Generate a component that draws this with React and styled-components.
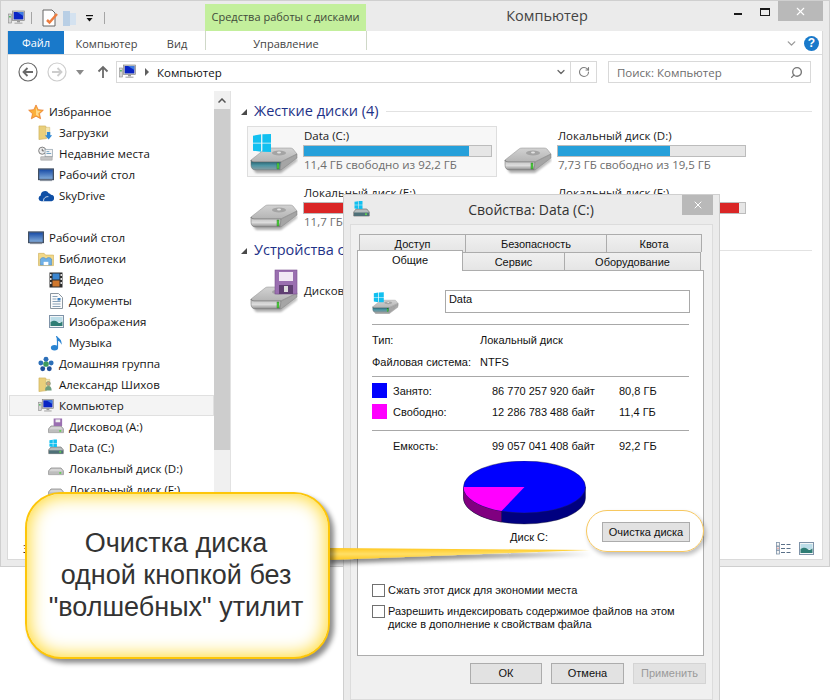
import React from "react";
import styled, { createGlobalStyle } from "styled-components";
import { ChevronDown, RotateCw, Search, X } from "lucide-react";

const UI = `"Open Sans", "Noto Sans", sans-serif`;
const DLG = `"Liberation Sans", Arial, sans-serif`;

const Global = createGlobalStyle`
  html, body { margin: 0; padding: 0; background: #fff; }
  * { box-sizing: border-box; }
`;

const Stage = styled.div`
  position: relative; width: 830px; height: 700px; overflow: hidden;
  background: #fff; font-family: ${UI}; font-size: 12px; color: #1a1a1a;
`;
const Window = styled.div`
  width: 830px; height: 567px; background: #ebebeb; border: 1px solid #cfcfcf;
  padding: 0 6px 6px; display: flex; flex-direction: column;
`;
const TitleBar = styled.div`
  height: 30px; flex: none; display: grid; grid-template-columns: 198px 161px 360px 1fr; margin-right: -6px;
`;
const Qat = styled.div`display: flex; align-items: center; padding: 4px 0 0 1px;`;
const QatSep = styled.span`width: 1px; height: 12px; background: #a5a5a5; margin: ${p => p.$m};`;
const QatGap = styled.span`width: ${p => p.$w}px; flex: none;`;
const ContextHead = styled.div`
  margin-top: 3px; background: #c3ef9c; color: #3f4a3a; text-align: center;
  font-size: 11px; line-height: 26px; white-space: nowrap;
`;
const Title = styled.div`
  text-align: center; font-size: 14.5px; line-height: 29px; color: #444; padding-left: 2px;
`;
const Controls = styled.div`display: flex; justify-content: flex-end; align-items: flex-start; padding-right: 6px;`;
const MinBtn = styled.span`width: 8px; height: 2px; background: #1a1a1a; margin: 12px 18px 0 0;`;
const MaxBtn = styled.span`width: 10px; height: 8px; border: 1px solid #1a1a1a; border-top-width: 2px; margin: 7px 8px 0 0;`;
const CloseBtn = styled.span`
  width: ${p => p.$w}px; height: 20px; background: #b9b9b9; color: #fff;
  display: flex; align-items: center; justify-content: center;
`;
const Inner = styled.div`
  flex: 1; min-height: 0; background: #fff; border: 1px solid #dadada; border-top: 0;
  display: flex; flex-direction: column;
`;
const RibbonTabs = styled.div`
  height: 24px; flex: none; display: flex; align-items: stretch; border-bottom: 1px solid #dadbdc;
  font-size: 11px; color: #444;
`;
const FileTab = styled.div`width: 56px; background: #1979ca; color: #fff; text-align: center; line-height: 23px;`;
const RibbonTab = styled.div`width: ${p => p.$w}px; text-align: center; line-height: 26px;`;
const ContextTab = styled.div`
  width: 162px; height: 19px; text-align: center; line-height: 26px; overflow: visible;
  border-left: 1px solid #cfd8c8; border-right: 1px solid #cfd8c8;
`;
const RibbonEnd = styled.div`
  flex: 1; display: flex; justify-content: flex-end; align-items: center; gap: 6px; padding: 2px 3px 0 0; color: #9a9a9a;
`;
const Help = styled.span`
  width: 15px; height: 15px; border-radius: 50%; background: #1979ca; color: #fff;
  font: bold 12px/15px ${DLG}; text-align: center;
`;
const Nav = styled.div`height: 36px; flex: none; display: flex; align-items: center; padding: 0 0 2px 10px;`;
const NavGroup = styled.div`display: flex; align-items: center; width: 98px;`;
const NavGap = styled.span`width: ${p => p.$w}px; flex: none;`;
const AddressBox = styled.div`
  width: 481px; height: 22px; border: 1px solid #d9d9d9; display: flex; align-items: center;
  font-size: 11.5px; color: #111;
`;
const Crumb = styled.span`flex: 1; display: flex; align-items: center; gap: 8px; padding-left: 2px;`;
const CrumbArrow = styled.span`width: 0; height: 0; border-left: 4px solid #5f5f5f; border-top: 4px solid transparent; border-bottom: 4px solid transparent; margin-left: 1px;`;
const AddrDown = styled.span`display: flex; margin-right: 3px; color: #666;`;
const AddrEnd = styled.span`
  width: 26px; height: 100%; border-left: 1px solid #d9d9d9; display: flex; align-items: center; justify-content: center; color: #7d7d7d;
`;
const SearchBox = styled.div`
  width: 203px; height: 22px; margin-left: 11px; border: 1px solid #d9d9d9; padding: 0 7px 0 8px;
  display: flex; align-items: center; justify-content: space-between; color: #6d6d6d; font-size: 11.5px;
`;
const SearchGlyph = styled.span`display: flex; color: #777; transform: scaleX(-1);`;
const Content = styled.div`height: 446px; flex: none; display: flex;`;
const Sidebar = styled.div`width: 206px; flex: none; padding-top: 10px; overflow: hidden;`;
const TreeRow = styled.div`
  height: 21px; margin: 0 0 0 1px; display: flex; align-items: center; gap: 5px;
  padding-left: ${p => 18 + p.$level * 10}px; white-space: nowrap; font-size: 11.5px; color: #151515;
  border: 1px solid ${p => (p.$sel ? "#e0e0e0" : "transparent")};
  background: ${p => (p.$sel ? "#f4f4f4" : "transparent")};
`;
const IconSlot = styled.span`width: 16px; flex: none; display: flex; justify-content: center;`;
const TreeGap = styled.div`height: 21px;`;
const Scrollbar = styled.div`
  width: 17px; flex: none; background: #f0f0f0; border-right: 1px solid #e2e2e2; display: flex; flex-direction: column;
`;
const ScrollUp = styled.div`height: 18px; display: flex; align-items: center; justify-content: center; color: #555;`;
const ScrollThumb = styled.div`height: 341px; width: 16px; background: #cdcdcd;`;
const Main = styled.div`flex: 1; padding: 10px 10px 0 10px; overflow: hidden;`;
const GroupHead = styled.div`
  height: 20px; display: flex; align-items: center; gap: 7px; margin: ${p => p.$m || "0 0 5px"};
  color: #1e3287; font-size: 14.5px; line-height: 18px; white-space: nowrap;
`;
const Tri = styled.span`width: 0; height: 0; border-right: 6px solid #4a4a4a; border-top: 6px solid transparent; margin-top: 2px;`;
const GroupLine = styled.span`flex: 1; height: 1px; background: #e2e2e2;`;
const TileGrid = styled.div`display: grid; grid-template-columns: 250px 250px; gap: 6px 4px; margin-left: 6px;`;
const Tile = styled.div`
  height: 51px; display: flex; align-items: ${p => (p.$center ? "center" : "flex-start")}; gap: 5px; padding: 1px 2px;
  border: 1px solid ${p => (p.$sel ? "#dedede" : "transparent")};
  background: ${p => (p.$sel ? "#f7f7f7" : "transparent")};
`;
const TileIcon = styled.span`width: 48px; height: 47px; flex: none; display: flex; align-items: center;`;
const TileBody = styled.div`width: 189px; font-size: 11.5px;`;
const TileName = styled.div`height: 16px; line-height: 16px; padding-left: 1px; white-space: nowrap;`;
const Bar = styled.div`height: 12px; margin-top: 1px; background: #e6e6e6; border: 1px solid #bcbcbc;`;
const Fill = styled.div`height: 100%; background: ${p => p.$c}; width: ${p => p.$v}%;`;
const TileInfo = styled.div`height: 16px; line-height: 16px; padding-left: 1px; color: #6d6d6d; white-space: nowrap;`;
const Status = styled.div`flex: 1; display: flex; align-items: center; justify-content: space-between; padding: 0 8px 0 15px; font-size: 11.5px; color: #333;`;
const Views = styled.div`display: flex; gap: 8px; align-items: center;`;

const Dialog = styled.div`
  position: absolute; left: 343px; top: 194px; width: 377px; height: 520px;
  background: #ebebeb; border: 1px solid #cfcfcf; padding: 0 6px; font-family: ${DLG}; font-size: 11px; color: #111;
`;
const DlgTitle = styled.div`height: 29px; display: flex; align-items: center; padding-left: 3px;`;
const DlgCaption = styled.div`flex: 1; text-align: center; font-family: ${UI}; font-size: 14px; color: #333; padding-left: 10px;`;
const DlgClose = styled.div`margin-top: -9px;`;
const Pane = styled.div`
  height: 476px; background: #f0f0f0; border: 1px solid #dcdcdc; padding: 9px 9px 0 6px;
`;
const TabRow = styled.div`display: flex; height: 18px; padding-left: ${p => p.$pl || 0}px; position: relative; z-index: ${p => p.$z || 0};`;
const DlgTab = styled.div`
  width: ${p => p.$w}px; height: 18px;
  background: linear-gradient(#f0f0f0, #e5e5e5);
  border: 1px solid #acacac; border-bottom: 0;
  margin-right: -1px; text-align: center; line-height: 15px; padding-top: 2px; white-space: nowrap;
  position: relative;
`;
const ActiveTab = styled.div`
  width: ${p => p.$w}px; height: 19px; background: #fff;
  border: 1px solid #acacac; border-width: 0 1px;
  margin-right: -1px; text-align: center; line-height: 15px; padding-top: 1px; white-space: nowrap;
  position: relative; z-index: 2;
  &::before {
    content: ""; position: absolute; left: -1px; right: -1px; top: -2px; height: 3px;
    background: #fff; border: 1px solid #acacac; border-bottom: 0;
  }
`;
const Panel = styled.div`
  height: 386px; background: #fff; border: 1px solid #adadad; padding: 17px 13px 0 14px; width: 347px;
`;
const HeadRow = styled.div`display: flex; align-items: center; height: 28px; gap: 46px;`;
const NameInput = styled.div`width: 246px; height: 23px; border: 1px solid #a9a9a9; padding: 2px 3px; margin-top: -2px;`;
const Rule = styled.div`height: 1px; background: #a8a8a8; margin: ${p => p.$m}; width: 317px;`;
const InfoRow = styled.div`height: ${p => p.$h}px; display: flex; align-items: center; white-space: nowrap;`;
const Lbl = styled.span`width: ${p => p.$w}px; padding-left: ${p => p.$pl || 0}px; flex: none;`;
const Swatch = styled.span`width: 15px; height: 15px; flex: none; margin-right: 6px; background: ${p => p.$c};`;
const PieWrap = styled.div`display: flex; padding-left: 91px; height: 67px; padding-top: 5px;`;
const Footer = styled.div`display: flex; justify-content: flex-end; align-items: flex-end; height: 20px; margin-top: -1px; width: 318px;`;
const DiskLabel = styled.span`margin-right: 54px; line-height: 13px; margin-bottom: -2px;`;
const Btn = styled.div`
  width: ${p => p.$w}px; height: ${p => p.$h}px; text-align: center; line-height: ${p => p.$h - 2}px;
  background: #e2e2e2; border: 1px solid ${p => (p.$off ? "#d4d4d4" : "#acacac")};
  color: ${p => (p.$off ? "#9a9a9a" : "#111")};
`;
const Check = styled.div`display: flex; gap: 3px; align-items: flex-start; margin-top: ${p => p.$mt}px; line-height: 13px;`;
const Box = styled.span`width: 13px; height: 13px; flex: none; border: 1px solid #707070; background: #fff;`;
const DlgButtons = styled.div`display: flex; gap: 9px; justify-content: flex-end; margin: 7px -3px 0 0;`;

const Callout = styled.div`
  position: absolute; left: 25px; top: 492px; width: 305px; height: 167px; border-radius: 36px;
  border: 2px solid #fdc609; background: #fff;
  box-shadow: inset 0 0 18px 2px #ffd92e, 4px 4px 5px rgba(0,0,0,.45);
  display: flex; align-items: center; justify-content: center; text-align: center;
  font-family: ${DLG}; font-size: 27px; line-height: 32px; color: #333; padding: 0 3px 2px 0;
`;
const Tail = styled.svg`position: absolute; left: 328px; top: 540px;`;
const Ring = styled.div`
  position: absolute; left: 586px; top: 510px; width: 118px; height: 42px; border-radius: 21px;
  border: 1.5px solid #f7c860; box-shadow: 2px 3px 4px rgba(0,0,0,.25);
`;

/* ---------- icons ---------- */
const PcIcon = () => (
  <svg width="17" height="16" viewBox="0 0 17 16">
    <rect x="0.5" y="4" width="3" height="9" fill="#d5d5d5" stroke="#8a8a8a" strokeWidth=".6" />
    <rect x="1.2" y="6" width="1.5" height="1.5" fill="#3fb34f" />
    <rect x="4.5" y="1" width="12" height="9.5" fill="#cfcfcf" stroke="#777" strokeWidth=".6" />
    <rect x="5.7" y="2" width="9.6" height="7.4" fill="#0a25c4" />
    <path d="M9 2h6.3v4z" fill="#3d7ae0" />
    <rect x="9" y="10.5" width="3" height="2" fill="#999" />
    <rect x="6.5" y="12.5" width="8" height="1.5" fill="#bbb" />
  </svg>
);
const Star = () => (
  <svg width="17" height="16" viewBox="0 0 17 16">
    <path d="M8.5.5l2.3 5 5.5.6-4.1 3.7 1.2 5.4-4.9-2.8-4.9 2.8 1.2-5.4L.7 6.1l5.5-.6z" fill="#fbb03b" stroke="#e8782a" strokeWidth=".8" />
    <path d="M8.5 3l1.5 3.6 3.6.4-2.8 2.4.8 3.5-3.1-1.8z" fill="#ffd98a" />
  </svg>
);
const Folder = ({ children }) => (
  <svg width="17" height="17" viewBox="0 0 17 17">
    <path d="M1 1.5h7l1 2v11.5l-8 1z" fill="#e9cf7b" stroke="#c9a94f" strokeWidth=".6" />
    <path d="M8 3h4.5v11H8z" fill="#f5e6ad" stroke="#cdb368" strokeWidth=".5" />
    {children}
  </svg>
);
const Downloads = () => (
  <Folder><path d="M9.5 8h3.5v3.5h2l-3.7 4.5-3.8-4.5h2z" fill="#2a86d6" /></Folder>
);
const Recent = () => (
  <svg width="17" height="16" viewBox="0 0 17 16">
    <circle cx="4.5" cy="4.5" r="3.8" fill="#eee" stroke="#777" />
    <path d="M4.5 2.5v2.2h2" fill="none" stroke="#444" strokeWidth=".8" />
    <rect x="7.5" y="3" width="8" height="8" fill="#f5f5f5" stroke="#8b9aa5" strokeWidth=".7" />
    <rect x="9" y="5" width="3" height="1" fill="#6f9fc0" /><rect x="9" y="7" width="5" height="1" fill="#6f9fc0" />
    <rect x="3" y="11" width="12" height="3.5" fill="#c5c5c5" stroke="#8a8a8a" strokeWidth=".5" />
  </svg>
);
const DesktopI = () => (
  <svg width="17" height="14" viewBox="0 0 17 14">
    <rect x=".5" y=".5" width="16" height="11.5" fill="#46618c" stroke="#3c4a5c" />
    <rect x="1.5" y="1.5" width="14" height="9.5" fill="url(#dk)" />
    <defs><linearGradient id="dk" x1="0" y1="0" x2="0" y2="1"><stop offset="0" stopColor="#1c4fa8" /><stop offset="1" stopColor="#7fa9d8" /></linearGradient></defs>
    <rect x="2" y="12" width="13" height="1.5" fill="#8b94a0" />
  </svg>
);
const Cloud = () => (
  <svg width="17" height="12" viewBox="0 0 17 12">
    <path d="M3.5 11.5a3 3 0 0 1-.6-5.9A4.6 4.6 0 0 1 11.4 3a3.6 3.6 0 0 1 2.4 1.6 3.5 3.5 0 0 1 .7 6.9z" fill="#0f4fa5" />
    <path d="M6 11.5c-.5-3 2-5 5-4.8" fill="none" stroke="#fff" strokeWidth=".9" />
  </svg>
);
const Libs = () => (
  <svg width="17" height="16" viewBox="0 0 17 16">
    <path d="M.5 2h6l1.5 1.8h8.5V15H.5z" fill="#f2d888" stroke="#c9a94f" strokeWidth=".6" />
    <path d="M2.5 8c2-2 4-2 6 0 2-2 4-2 6 0v6.500h-12z" fill="#6fb0e6" stroke="#3b7fc0" strokeWidth=".5" />
    <path d="M6 14.5V11h5v3.5z" fill="#fff" />
  </svg>
);
const Film = () => (
  <svg width="14" height="16" viewBox="0 0 14 16">
    <rect x=".5" y=".5" width="13" height="15" fill="#2c2c2c" />
    <rect x="3.5" y="1.5" width="7" height="6" fill="#3b86d0" /><rect x="3.5" y="8.5" width="7" height="6" fill="#d0782e" />
    <g fill="#ddd"><rect x="1" y="2" width="1.5" height="2" /><rect x="1" y="6" width="1.5" height="2" /><rect x="1" y="10" width="1.5" height="2" /><rect x="11.5" y="2" width="1.5" height="2" /><rect x="11.5" y="6" width="1.5" height="2" /><rect x="11.5" y="10" width="1.5" height="2" /></g>
  </svg>
);
const Doc = () => (
  <svg width="13" height="16" viewBox="0 0 13 16">
    <path d="M.5.5h8l4 4v11H.5z" fill="#fbfbfb" stroke="#8b96a0" />
    <g fill="#8aa2b8"><rect x="2.5" y="3" width="5" height="1" /><rect x="2.5" y="5.5" width="4" height="1" /><rect x="2.5" y="8" width="8" height="1" /><rect x="2.5" y="10.5" width="8" height="1" /><rect x="2.5" y="13" width="8" height="1" /></g>
    <rect x="7.5" y="5" width="3" height="2.5" fill="#3b80c0" />
  </svg>
);
const Pic = () => (
  <svg width="15" height="13" viewBox="0 0 15 13">
    <rect x=".5" y=".5" width="14" height="12" fill="#f4f6f7" stroke="#7f93a8" />
    <rect x="1.5" y="2" width="12" height="5" fill="#bcdde8" />
    <path d="M1.5 7c3-1.800 5-1.800 7 0s3 .5 5-.5V11h-12z" fill="#2f7d75" />
  </svg>
);
const Music = () => (
  <svg width="14" height="16" viewBox="0 0 14 16">
    <path d="M7.5 1c.3 2.500 4.500 3 4.500 6.500-1-1.700-2.500-2.300-3.500-2.400V12.500" fill="#2a84d2" stroke="#2a84d2" strokeWidth="1.2" />
    <ellipse cx="5.5" cy="12.8" rx="3.6" ry="2.7" fill="#2a84d2" />
  </svg>
);
const Home = () => (
  <svg width="17" height="16" viewBox="0 0 17 16">
    <circle cx="8.5" cy="8" r="3" fill="#3c9a5c" />
    <circle cx="8.5" cy="3" r="2.6" fill="#2c6fb8" /><circle cx="3" cy="7" r="2.6" fill="#2c6fb8" />
    <circle cx="14" cy="7" r="2.6" fill="#2c6fb8" /><circle cx="5" cy="13" r="2.6" fill="#1f4f9a" /><circle cx="12" cy="13" r="2.6" fill="#1f4f9a" />
  </svg>
);
const UserF = () => (
  <Folder>
    <circle cx="11" cy="7.5" r="2.2" fill="#caa27d" stroke="#5a8a6f" strokeWidth=".5" />
    <path d="M7.5 15c0-3.500 1.500-5 3.500-5s3.500 1.500 3.500 5z" fill="#6d9d7f" />
  </Folder>
);
const Win = ({ x, y, s, c = "#12c0f0" }) => (
  <g fill={c}>
    <path d={`M${x} ${y + s * 0.1}l${s * 0.45} -${s * 0.08}v${s * 0.46}h-${s * 0.45}z`} />
    <path d={`M${x + s * 0.52} ${y + s * 0.01}l${s * 0.48} -${s * 0.01}v${s * 0.48}h-${s * 0.48}z`} />
    <path d={`M${x} ${y + s * 0.53}h${s * 0.45}v${s * 0.46}l-${s * 0.45} -${s * 0.06}z`} />
    <path d={`M${x + s * 0.52} ${y + s * 0.53}h${s * 0.48}v${s * 0.47}l-${s * 0.48} -${s * 0.01}z`} />
  </g>
);
let gid = 0;
const Drive = ({ w = 48, h = 47, win, floppy, teal }) => {
  const id = "dr" + ++gid;
  return (
    <svg width={w} height={h} viewBox="0 0 48 47">
      <defs>
        <linearGradient id={id + "t"} x1="0" y1="0" x2="0" y2="1">
          <stop offset="0" stopColor="#d2d2d2" /><stop offset="1" stopColor="#b4b4b4" />
        </linearGradient>
        <linearGradient id={id + "f"} x1="0" y1="0" x2="0" y2="1">
          <stop offset="0" stopColor={teal ? "#17505f" : "#bdbdbd"} />
          <stop offset=".55" stopColor={teal ? "#4f95a3" : "#dcdcdc"} />
          <stop offset="1" stopColor={teal ? "#8b9ea2" : "#8b8b8b"} />
        </linearGradient>
        <filter id={id + "b"}><feGaussianBlur stdDeviation="1.2" /></filter>
      </defs>
      <path d="M3 41h28l16-11v3L31 45H6z" fill="#000" opacity=".3" filter={`url(#${id}b)`} />
      <path d="M1 32L15 21q1-1 3-1h22q2 0 3 1l4 5-16 8H4q-3 0-3-2z" fill={`url(#${id}t)`} stroke="#8c8c8c" strokeWidth=".5" />
      <ellipse cx="29" cy="25" rx="7" ry="2.5" fill="#a4a4a4" />
      <ellipse cx="29" cy="24.5" rx="2" ry=".9" fill="#e2e2e2" />
      <path d="M1 32q0 2 3 2h27l-1 8H6q-5 0-5-5z" fill={`url(#${id}f)`} stroke="#666" strokeWidth=".5" />
      <path d="M47 26v4L31 42h-1l1-8z" fill="#a5a5a5" stroke="#7a7a7a" strokeWidth=".5" />
      <rect x="27" y="35" width="2" height="6" fill="#4fd13f" stroke="#1f6d1a" strokeWidth=".4" />
      {win && <Win x={3} y={6} s={18} />}
      {floppy && (
        <g>
          <rect x="25" y="3" width="22" height="24" fill="#9a6fb0" stroke="#7a4f90" strokeWidth=".6" />
          <rect x="29" y="5" width="14" height="9" fill="#f1e7f4" />
          <rect x="29" y="18" width="14" height="9" fill="#5f3f72" /><rect x="34" y="19" width="4" height="6" fill="#ddd" />
        </g>
      )}
    </svg>
  );
};
const Small = ({ win, floppy }) => (
  <svg width="17" height="17" viewBox="0 0 17 17">
    <path d="M.7 11l2.5-3h10.600l2.500 3v4H.7z" fill={win ? "#b6bcbc" : "#d5d5d5"} stroke="#6d6d6d" strokeWidth=".7" />
    <rect x="1" y="11.5" width="15" height="3.5" fill={win ? "#4f7078" : "#bdbdbd"} />
    <rect x="12" y="12.3" width="2" height="1.8" fill="#5fd04f" />
    {win && <Win x={1.5} y={0} s={8} />}
    {floppy && <g><rect x="6" y="0" width="9" height="8" fill="#9a6fb0" /><rect x="8" y="1" width="5" height="3" fill="#eee" /></g>}
  </svg>
);
const Back = ({ on }) => (
  <svg width="20" height="20" viewBox="0 0 20 20">
    <circle cx="10" cy="10" r="9" fill="none" stroke={on ? "#6a6a6a" : "#cdcdcd"} strokeWidth="1.2" />
    <path d={on ? "M15 10H6M9.5 6L5.5 10l4 4" : "M5 10h9M10.5 6l4 4-4 4"} fill="none" stroke={on ? "#6a6a6a" : "#cdcdcd"} strokeWidth="1.8" />
  </svg>
);
const UpArrow = () => (
  <svg width="12" height="14" viewBox="0 0 12 14"><path d="M6 13V2M1.5 6.5L6 2l4.5 4.5" fill="none" stroke="#6a6a6a" strokeWidth="1.8" /></svg>
);
const MiniDown = () => <svg width="8" height="5" viewBox="0 0 8 5"><path d="M0 0h8L4 5z" fill="#8a8a8a" /></svg>;
const QatDoc = () => (
  <svg width="16" height="18" viewBox="0 0 16 18">
    <path d="M1 1h9l3 3v13H1z" fill="#fff" stroke="#666" />
    <path d="M5 11l2.5 2.5L15 5" fill="none" stroke="#ed7d3f" strokeWidth="2.5" />
  </svg>
);
const QatFolder = () => (
  <svg width="14" height="17" viewBox="0 0 14 17">
    <path d="M0 1h7v15H0z" fill="#b9cfe5" /><path d="M7 3h6v12H7z" fill="#d4e2f0" />
  </svg>
);
const QatDrop = () => (
  <svg width="7" height="7" viewBox="0 0 7 7"><rect width="7" height="1.2" fill="#111" /><path d="M.5 3h6L3.5 6.500z" fill="#111" /></svg>
);
const ListView = () => (
  <svg width="15" height="13" viewBox="0 0 15 13">
    <g fill="#f4f4f4" stroke="#7f93a8" strokeWidth=".8"><rect x=".5" y=".5" width="3" height="3.5" /><rect x=".5" y="4.5" width="3" height="3.5" /><rect x=".5" y="8.5" width="3" height="3.5" /></g>
    <rect x="1.5" y="5.7" width="1" height="1" fill="#c33" />
    <g fill="#5a7088"><rect x="5" y="2" width="4" height="1" /><rect x="10.5" y="2" width="4" height="1" /><rect x="5" y="6" width="4" height="1" /><rect x="10.5" y="6" width="4" height="1" /><rect x="5" y="10" width="4" height="1" /><rect x="10.5" y="10" width="4" height="1" /></g>
  </svg>
);
const Pie = () => (
  <svg width="124" height="64" viewBox="0 0 124 64">
    <path d="M.5 26v11a61 26 0 0 0 122 0V26z" fill="#000080" stroke="#223" strokeWidth=".4" />
    <path d="M.5 26v11A61 26 0 0 0 38.5 61.1V50.1A61 26 0 0 1 .5 26z" fill="#800080" stroke="#223" strokeWidth=".4" />
    <ellipse cx="61.5" cy="26" rx="61" ry="26" fill="#0000ff" stroke="#223" strokeWidth=".4" />
    <path d="M61.5 26H.5A61 26 0 0 0 38.5 50.1z" fill="#ff00ff" />
  </svg>
);

const tree = [
  [0, Star, "Избранное"], [1, Downloads, "Загрузки"], [1, Recent, "Недавние места"], [1, DesktopI, "Рабочий стол"], [1, Cloud, "SkyDrive"],
  null,
  [0, DesktopI, "Рабочий стол"], [1, Libs, "Библиотеки"], [2, Film, "Видео"], [2, Doc, "Документы"], [2, Pic, "Изображения"], [2, Music, "Музыка"],
  [1, Home, "Домашняя группа"], [1, UserF, "Александр Шихов"], [1, PcIcon, "Компьютер", true],
  [2, () => <Small floppy />, "Дисковод (A:)"], [2, () => <Small win />, "Data (C:)"], [2, Small, "Локальный диск (D:)"], [2, Small, "Локальный диск (F:)"],
];
const disks = [
  { n: "Data (C:)", v: 88, c: "#26a0da", t: "11,4 ГБ свободно из 92,2 ГБ", sel: true, win: true, teal: true },
  { n: "Локальный диск (D:)", v: 60, c: "#26a0da", t: "7,73 ГБ свободно из 19,5 ГБ" },
  { n: "Локальный диск (E:)", v: 94, c: "#da2626", t: "11,7 ГБ свободно из 195 ГБ" },
  { n: "Локальный диск (F:)", v: 97, c: "#da2626", t: "6,20 ГБ свободно из 195 ГБ" },
];

export default function App() {
  return (
    <Stage>
      <Global />
      <Window>
        <TitleBar>
          <Qat>
            <PcIcon />
            <QatSep $m="0 10px 0 6px" />
            <QatDoc />
            <QatGap $w={5} />
            <QatFolder />
            <QatGap $w={9} />
            <QatDrop />
            <QatSep $m="0 0 0 11px" />
          </Qat>
          <ContextHead>Средства работы с дисками</ContextHead>
          <Title>Компьютер</Title>
          <Controls><MinBtn /><MaxBtn /><CloseBtn $w={45}><X size={13} strokeWidth={2} /></CloseBtn></Controls>
        </TitleBar>
        <Inner>
          <RibbonTabs>
            <FileTab>Файл</FileTab>
            <RibbonTab $w={85}>Компьютер</RibbonTab>
            <RibbonTab $w={56}>Вид</RibbonTab>
            <ContextTab>Управление</ContextTab>
            <RibbonEnd><ChevronDown size={13} strokeWidth={2.5} /><Help>?</Help></RibbonEnd>
          </RibbonTabs>
          <Nav>
            <NavGroup>
              <Back on /><NavGap $w={9} /><Back /><NavGap $w={9} /><MiniDown />
              <NavGap $w={13} /><UpArrow />
            </NavGroup>
            <AddressBox>
              <Crumb><PcIcon /><CrumbArrow />Компьютер</Crumb>
              <AddrDown><ChevronDown size={12} strokeWidth={2.5} /></AddrDown>
              <AddrEnd><RotateCw size={12} strokeWidth={2.2} /></AddrEnd>
            </AddressBox>
            <SearchBox>Поиск: Компьютер<SearchGlyph><Search size={13} strokeWidth={2.5} /></SearchGlyph></SearchBox>
          </Nav>
          <Content>
            <Sidebar>
              {tree.map((r, i) => {
                if (!r) return <TreeGap key={i} />;
                const [lvl, I, label, sel] = r;
                return <TreeRow key={i} $level={lvl} $sel={sel}><IconSlot><I /></IconSlot>{label}</TreeRow>;
              })}
            </Sidebar>
            <Scrollbar>
              <ScrollUp><svg width="8" height="5" viewBox="0 0 8 5"><path d="M.5 4.5L4 1l3.5 3.5" fill="none" stroke="#555" strokeWidth="1.5" /></svg></ScrollUp>
              <ScrollThumb />
            </Scrollbar>
            <Main>
              <GroupHead><Tri />Жесткие диски (4)<GroupLine /></GroupHead>
              <TileGrid>
                {disks.map(d => (
                  <Tile key={d.n} $sel={d.sel}>
                    <TileIcon><Drive win={d.win} teal={d.teal} /></TileIcon>
                    <TileBody>
                      <TileName>{d.n}</TileName>
                      <Bar><Fill $c={d.c} $v={d.v} /></Bar>
                      <TileInfo>{d.t}</TileInfo>
                    </TileBody>
                  </Tile>
                ))}
              </TileGrid>
              <GroupHead $m="6px 0 5px"><Tri />Устройства со съемными носителями (1)<GroupLine /></GroupHead>
              <TileGrid>
                <Tile $center>
                  <TileIcon><Drive floppy /></TileIcon>
                  <TileBody><TileName>Дисковод (A:)</TileName></TileBody>
                </Tile>
              </TileGrid>
            </Main>
          </Content>
          <Status>
            <span>Элементов: 7</span>
            <Views><ListView /><Pic /></Views>
          </Status>
        </Inner>
      </Window>

      <Dialog>
        <DlgTitle>
          <Small win />
          <DlgCaption>Свойства: Data (C:)</DlgCaption>
          <DlgClose><CloseBtn $w={31}><X size={12} strokeWidth={2} /></CloseBtn></DlgClose>
        </DlgTitle>
        <Pane>
          <TabRow $pl={2}>
            <DlgTab $w={107}>Доступ</DlgTab>
            <DlgTab $w={142}>Безопасность</DlgTab>
            <DlgTab $w={96}>Квота</DlgTab>
          </TabRow>
          <TabRow $z={1}>
            <ActiveTab $w={106}>Общие</ActiveTab>
            <DlgTab $w={103}>Сервис</DlgTab>
            <DlgTab $w={137}>Оборудование</DlgTab>
          </TabRow>
          <Panel>
            <HeadRow><Drive w={27} h={26} win teal /><NameInput>Data</NameInput></HeadRow>
            <Rule $m="8px 0 4px" />
            <InfoRow $h={22}><Lbl $w={108}>Тип:</Lbl>Локальный диск</InfoRow>
            <InfoRow $h={22}><Lbl $w={108}>Файловая система:</Lbl>NTFS</InfoRow>
            <Rule $m="3px 0 3px" />
            <InfoRow $h={21}><Swatch $c="#0000ff" /><Lbl $w={99}>Занято:</Lbl><Lbl $w={127}>86 770 257 920 байт</Lbl>80,8 ГБ</InfoRow>
            <InfoRow $h={21}><Swatch $c="#ff00ff" /><Lbl $w={99}>Свободно:</Lbl><Lbl $w={127}>12 286 783 488 байт</Lbl>11,4 ГБ</InfoRow>
            <Rule $m="8px 0 5px" />
            <InfoRow $h={20}><Lbl $w={120} $pl={21}>Емкость:</Lbl><Lbl $w={127}>99 057 041 408 байт</Lbl>92,2 ГБ</InfoRow>
            <PieWrap><Pie /></PieWrap>
            <Footer>
              <DiskLabel>Диск C:</DiskLabel>
              <Btn $w={88} $h={20}>Очистка диска</Btn>
            </Footer>
            <Check $mt={42}><Box />Сжать этот диск для экономии места</Check>
            <Check $mt={8}><Box /><span>Разрешить индексировать содержимое файлов на этом<br />диске в дополнение к свойствам файла</span></Check>
          </Panel>
          <DlgButtons>
            <Btn $w={72} $h={21}>ОК</Btn>
            <Btn $w={73} $h={21}>Отмена</Btn>
            <Btn $w={73} $h={21} $off>Применить</Btn>
          </DlgButtons>
        </Pane>
      </Dialog>

      <Tail width="270" height="32" viewBox="0 0 270 32">
        <defs>
          <filter id="ts" x="-5%" y="-50%" width="110%" height="250%"><feDropShadow dx="2" dy="4" stdDeviation="2" floodColor="#000" floodOpacity=".45" /></filter>
          <linearGradient id="tg" x1="0" y1="0" x2="0" y2="1"><stop offset="0" stopColor="#ffc81e" /><stop offset=".5" stopColor="#ffdf66" /><stop offset="1" stopColor="#ffc81e" /></linearGradient>
        </defs>
        <path d="M0 8L262 10L0 20z" fill="url(#tg)" filter="url(#ts)" />
      </Tail>
      <Ring />
      <Callout>Очистка диска<br />одной кнопкой без<br />"волшебных" утилит</Callout>
    </Stage>
  );
}
